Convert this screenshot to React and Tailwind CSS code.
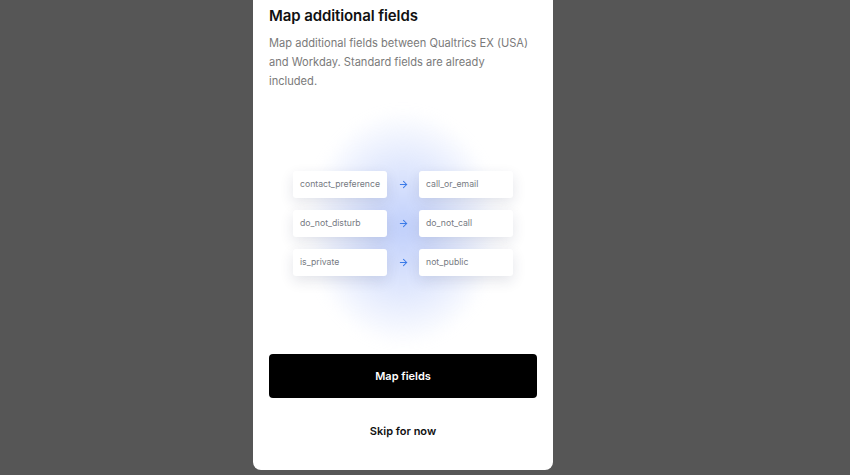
import { ArrowRight } from "lucide-react";

const rows = [
  ["contact_preference", "call_or_email"],
  ["do_not_disturb", "do_not_call"],
  ["is_private", "not_public"],
];

const FieldBox = ({ label }) => (
  <div className="w-[94px] h-[27px] flex items-center px-[7px] pt-[2px] bg-white rounded-[3px] shadow-[0_5px_14px_rgba(30,40,80,0.12)] text-[8.7px] text-[#767a82]">
    {label}
  </div>
);

export default function App() {
  return (
    <div
      className="w-[850px] h-[475px] bg-[#565656] flex pl-[253px]"
      style={{ fontFamily: "Inter, 'Noto Sans', sans-serif" }}
    >
      <div className="w-[300px] h-[470px] bg-white rounded-b-[8px] px-4 pt-[6px] flex flex-col">
        <h1 className="text-[15px] leading-5 font-semibold text-[#111] tracking-[-0.1px]">
          Map additional fields
        </h1>
        <p className="mt-[8px] max-w-[262px] text-[11.1px] leading-[19px] text-[#7a7a7a]">
          Map additional fields between Qualtrics EX (USA) and Workday. Standard
          fields are already included.
        </p>
        <div className="relative mt-[3px] h-[254px] flex items-center justify-center">
          <div className="absolute left-[38px] top-[16px] w-[192px] h-[236px] rounded-full bg-[radial-gradient(closest-side,rgba(180,198,250,0.85),rgba(206,218,252,0.6)_55%,rgba(255,255,255,0)_100%)] blur-[6px]" />
          <div className="relative flex flex-col gap-[12px] mt-[4px]">
            {rows.map(([a, b]) => (
              <div key={a} className="flex items-center">
                <FieldBox label={a} />
                <div className="w-[32px] flex justify-center text-[#3b7be8]">
                  <ArrowRight size={11} strokeWidth={2.2} />
                </div>
                <FieldBox label={b} />
              </div>
            ))}
          </div>
        </div>
        <button className="mt-[6px] h-[44px] w-full bg-black rounded-[4px] text-white text-[11px] font-semibold">
          Map fields
        </button>
        <button className="mt-[25px] text-[11px] font-semibold text-[#111]">
          Skip for now
        </button>
      </div>
    </div>
  );
}
